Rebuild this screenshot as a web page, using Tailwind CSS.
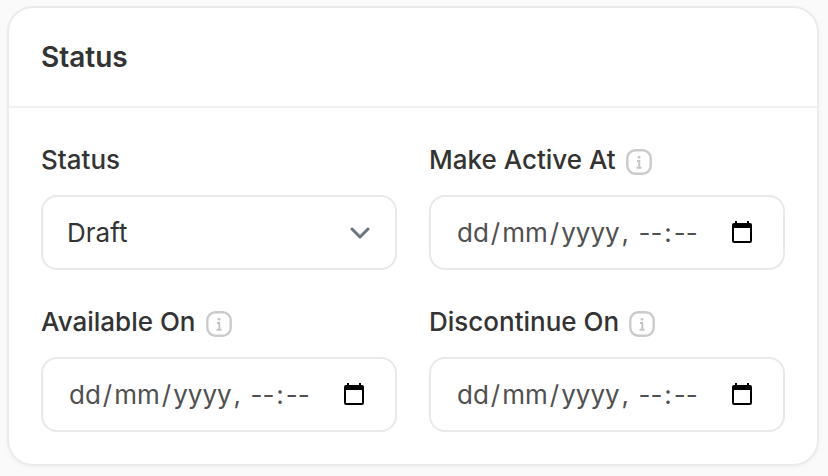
<!DOCTYPE html>
<html lang="en">
<head>
<meta charset="utf-8">
<title>Status</title>
<script src="https://cdn.jsdelivr.net/npm/@tailwindcss/browser@4"></script>
</head>
<body class="bg-[#fafafa] font-['Inter',sans-serif] text-[#333333]">
<svg class="hidden">
  <symbol id="info" viewBox="0 0 26 26"><rect x="1.300" y="1.300" width="23.400" height="23.400" rx="8" fill="none" stroke="#cbcbcb" stroke-width="2.400"/><path d="M11 12h2.300v6.500M10.500 18.700h5" fill="none" stroke="#c4c4c4" stroke-width="1.900"/><circle cx="13" cy="8.300" r="1.400" fill="#c4c4c4"/></symbol>
  <symbol id="cal" viewBox="0 0 20 22"><path fill="#000" fill-rule="evenodd" d="M3 0h2v2h10V0h2v2h1a2 2 0 0 1 2 2v16a2 2 0 0 1-2 2H2a2 2 0 0 1-2-2V4a2 2 0 0 1 2-2h1zM2 7v13h16V7z"/></symbol>
</svg>
<main class="h-[476px] pt-[6px] pr-[9px] pl-[7px]">
  <section class="h-[460px] rounded-[26px] border-2 border-[#ebebeb] bg-white shadow-[0_2px_4px_rgba(0,0,0,0.03)]">
    <h2 class="flex h-[100px] items-center border-b-2 border-[#f1f1f1] pl-8 text-[28px] font-semibold">Status</h2>
    <div class="grid grid-cols-[356px_356px] gap-x-8 gap-y-[33px] px-8 pt-[33px]">
      <div>
        <div class="flex h-9 items-center text-[26px] font-medium">Status</div>
        <div class="mt-[18px] flex h-[75px] items-center justify-between rounded-[16px] border-2 border-[#e9e9e9] px-6 text-[26px]">Draft
          <svg class="mr-px h-3 w-5" viewBox="0 0 20 12" fill="none" stroke="#6b7280" stroke-width="3" stroke-linecap="round" stroke-linejoin="round"><path d="m2 2 8 8 8-8"/></svg></div>
      </div>
      <div>
        <div class="flex h-9 items-center gap-[10px] text-[26px] font-medium">Make Active At<svg class="mt-[5px] size-[26px]"><use href="#info"/></svg></div>
        <div class="mt-[18px] flex h-[75px] items-center justify-between rounded-[16px] border-2 border-[#e9e9e9] pr-[31px] pl-6 text-[26px] text-[#505050]"><span class="flex whitespace-pre [font-feature-settings:'calt'_0]"><span class="px-0.5">dd</span>/<span class="px-0.5">mm</span>/<span class="px-0.5">yyyy</span>, <span class="px-0.5">--</span>:<span class="px-0.5">--</span></span><svg class="mb-[2px] h-[22px] w-5"><use href="#cal"/></svg></div>
      </div>
      <div>
        <div class="flex h-9 items-center gap-[10.500px] text-[26px] font-medium">Available On<svg class="mt-[5px] size-[26px]"><use href="#info"/></svg></div>
        <div class="mt-[18px] flex h-[75px] items-center justify-between rounded-[16px] border-2 border-[#e9e9e9] pr-[31px] pl-6 text-[26px] text-[#505050]"><span class="flex whitespace-pre [font-feature-settings:'calt'_0]"><span class="px-0.5">dd</span>/<span class="px-0.5">mm</span>/<span class="px-0.5">yyyy</span>, <span class="px-0.5">--</span>:<span class="px-0.5">--</span></span><svg class="mb-[2px] h-[22px] w-5"><use href="#cal"/></svg></div>
      </div>
      <div>
        <div class="flex h-9 items-center gap-[10px] text-[26px] font-medium">Discontinue On<svg class="mt-[5px] size-[26px]"><use href="#info"/></svg></div>
        <div class="mt-[18px] flex h-[75px] items-center justify-between rounded-[16px] border-2 border-[#e9e9e9] pr-[31px] pl-6 text-[26px] text-[#505050]"><span class="flex whitespace-pre [font-feature-settings:'calt'_0]"><span class="px-0.5">dd</span>/<span class="px-0.5">mm</span>/<span class="px-0.5">yyyy</span>, <span class="px-0.5">--</span>:<span class="px-0.5">--</span></span><svg class="mb-[2px] h-[22px] w-5"><use href="#cal"/></svg></div>
      </div>
    </div>
  </section>
</main>
</body>
</html>
